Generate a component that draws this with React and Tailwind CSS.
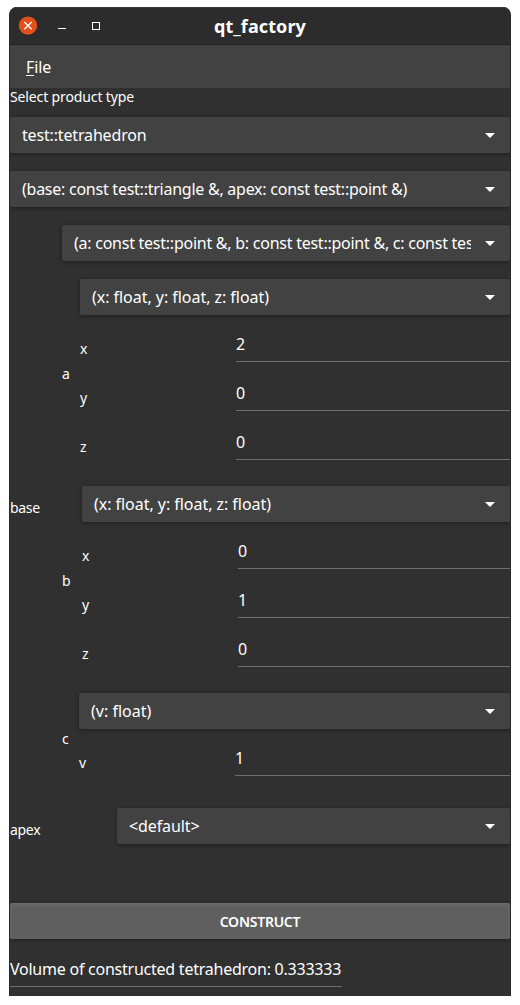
function Caret() {
  return (
    <svg className="h-[5px] w-[10px] shrink-0" viewBox="0 0 10 5" fill="#fff">
      <path d="M0 0h10L5 5z" />
    </svg>
  );
}

function Combo({ text, tracking = "tracking-[-0.25px]", className = "" }) {
  return (
    <div
      className={`flex h-9 items-center rounded-[2px] bg-[#424242] pr-[15px] pl-3 shadow-[0_1px_4px_rgba(0,0,0,0.38)] ${className}`}
    >
      <span className={`mr-[14px] min-w-0 flex-1 overflow-hidden text-base leading-9 whitespace-nowrap ${tracking}`}>
        {text}
      </span>
      <Caret />
    </div>
  );
}

function Label({ children, className = "" }) {
  return <span className={`shrink-0 text-[14px] leading-5 ${className}`}>{children}</span>;
}

function Field({ name, value }) {
  return (
    <div className="flex h-[31px]">
      <Label className="w-[156px] pt-2">{name}</Label>
      <div className="flex-1 border-b border-[#6e6e6e] text-base leading-[27px]">{value}</div>
    </div>
  );
}

function Group({ name, width, signature, tracking, fields }) {
  return (
    <div className="flex items-center">
      <Label className={`pt-[9px] ${width}`}>{name}</Label>
      <div className="min-w-0 flex-1">
        <Combo text={signature} tracking={tracking} />
        <div className="flex flex-col gap-[18px] pt-4">
          {fields.map(([n, v]) => (
            <Field key={n} name={n} value={v} />
          ))}
        </div>
      </div>
    </div>
  );
}

function TitleBar() {
  return (
    <div className="grid h-[38px] shrink-0 grid-cols-[1fr_auto_1fr] items-center border-t border-b border-t-[#3c3c3c] border-b-[#222222] bg-[#2c2c2c]">
      <div className="flex items-center pl-2">
        <svg className="size-[20px]" viewBox="0 0 20 20" fill="none">
          <circle cx="10" cy="9.6" r="9.2" fill="#e2501b" />
          <path d="M6.3 5.9l7.4 7.4M13.7 5.9l-7.4 7.4" stroke="#fff" strokeWidth="1.4" />
        </svg>
        <div className="mt-[5px] ml-5 h-px w-2 bg-white" />
        <div className="ml-[26px] size-2 border border-white" />
      </div>
      <span className="text-[18px] leading-6 font-bold tracking-[0.1px]">qt_factory</span>
      <span />
    </div>
  );
}

export default function App() {
  return (
    <div className="h-[1005px] w-[520px] bg-white pt-[7px] pl-[9px] font-['Noto_Sans','Open_Sans',sans-serif] text-white">
      <div className="flex h-[989px] w-[502px] flex-col overflow-hidden rounded-t-lg border-x border-[#292929] bg-[#303030]">
        <TitleBar />
        <div className="flex h-[43px] shrink-0 items-center bg-[#424242] px-4">
          <span className="text-base leading-6 tracking-[-0.1px]">
            <span className="inline-block h-[21px] border-b border-white leading-6">F</span>ile
          </span>
        </div>
        <div className="flex h-[29px] shrink-0 items-start">
          <Label className="-mt-px tracking-[-0.13px]">Select product type</Label>
        </div>
        <Combo text="test::tetrahedron" tracking="tracking-[-0.16px]" />
        <Combo className="mt-[18px]" text="(base: const test::triangle &, apex: const test::point &)" />
        <div className="mt-[18px] flex items-center">
          <Label className="w-[52px] pt-[15px] tracking-[-0.3px]">base</Label>
          <div className="min-w-0 flex-1">
            <Combo text="(a: const test::point &, b: const test::point &, c: const test::point &)" />
            <div className="flex flex-col gap-[26px] pt-[18px]">
              <Group name="a" width="w-[18px]" signature="(x: float, y: float, z: float)" tracking="tracking-[-0.04px]" fields={[["x", "2"], ["y", "0"], ["z", "0"]]} />
              <Group name="b" width="w-[20px]" signature="(x: float, y: float, z: float)" tracking="tracking-[-0.04px]" fields={[["x", "0"], ["y", "1"], ["z", "0"]]} />
              <Group name="c" width="w-[17px]" signature="(v: float)" tracking="tracking-normal" fields={[["v", "1"]]} />
            </div>
          </div>
        </div>
        <div className="mt-8 flex items-center">
          <Label className="w-[107px] pt-[8px] tracking-[-0.3px]">apex</Label>
          <Combo className="flex-1" text="<default>" tracking="tracking-[-0.1px]" />
        </div>
        <button className="mt-[59px] h-9 shrink-0 rounded-[2px] bg-[#5f5f5f] pt-px text-[14px] font-semibold tracking-[-0.25px] shadow-[0_1px_4px_rgba(0,0,0,0.38),inset_0_2px_5px_rgba(255,255,255,0.09)]">
          CONSTRUCT
        </button>
        <div className="mt-[17px] h-[31px] w-[332px] shrink-0 border-b border-[#6e6e6e] text-base leading-[26px] tracking-[-0.24px] whitespace-nowrap">
          Volume of constructed tetrahedron: 0.333333
        </div>
      </div>
    </div>
  );
}
